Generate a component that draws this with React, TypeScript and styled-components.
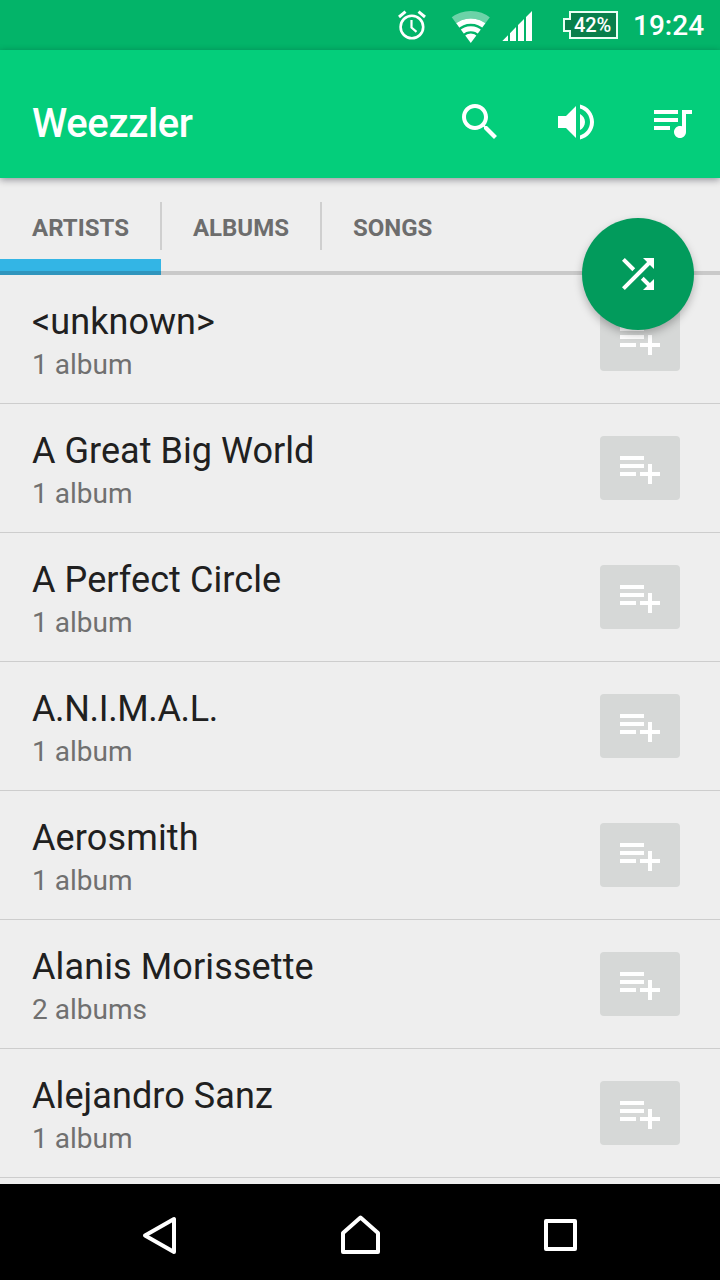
import React from 'react';
import styled, { createGlobalStyle } from 'styled-components';

const GlobalStyle = createGlobalStyle`
  * { box-sizing: border-box; }
  body { margin: 0; background: #eeeeee; font-family: Roboto, "Liberation Sans", sans-serif; }
`;

const Screen = styled.div`
  width: 720px;
  height: 1280px;
  display: flex;
  flex-direction: column;
  overflow: hidden;
  background: #eeeeee;
`;

const StatusBar = styled.header`
  height: 50px;
  flex: none;
  display: flex;
  align-items: center;
  justify-content: flex-end;
  padding-right: 16px;
  background: #03b469;
  color: #fff;
`;

const StatusIcons = styled.svg`
  display: block;
  width: 140px;
  height: 50px;
  margin-right: 26px;
`;

const Battery = styled.div`
  position: relative;
  width: 55px;
  height: 50px;
  display: flex;
  align-items: center;
  justify-content: center;
  padding-left: 4px;
  font-size: 20px;
  font-weight: 500;
  letter-spacing: -0.2px;
`;

const BatteryShape = styled.svg`
  position: absolute;
  inset: 0;
`;

const BatteryLabel = styled.span`
  position: relative;
`;

const Clock = styled.time`
  width: 71px;
  margin-left: 15px;
  font-size: 28px;
  font-weight: 500;
  line-height: 50px;
  padding-top: 2px;
  white-space: nowrap;
`;

const Toolbar = styled.div`
  position: relative;
  z-index: 1;
  height: 128px;
  flex: none;
  display: flex;
  align-items: flex-start;
  padding: 0 24px 0 32px;
  background: #04ce7b;
  color: #fff;
  box-shadow: 0 2px 7px rgba(0, 0, 20, 0.38);
`;

const AppTitle = styled.h1`
  margin: 0;
  flex: 1;
  padding-top: 50px;
  font-size: 40px;
  font-weight: 500;
  line-height: 48px;
  letter-spacing: -0.35px;
`;

const Actions = styled.div`
  display: flex;
  gap: 48px;
  padding-top: 48px;
`;

const Glyph = styled.svg`
  display: block;
  flex: none;
  width: 48px;
  height: 48px;
  fill: #fff;
`;

const Tabs = styled.nav`
  position: relative;
  height: 97px;
  flex: none;
  display: flex;
  border-bottom: 4px solid #c9c9c9;
`;

const Tab = styled.div<{ $active?: boolean }>`
  position: relative;
  height: 97px;
  padding: 34px 32px 0;
  font-size: 24px;
  font-weight: 700;
  line-height: 32px;
  color: #6d6d6d;
  ${({ $active }) =>
    $active &&
    `
    background: linear-gradient(#33b5e5 0 12px, #2f95bd 12px 16px) left bottom / 100% 16px no-repeat;
  `}
`;

const TabDivider = styled.i`
  width: 2px;
  height: 48px;
  margin: 24px -1px 0;
  background: #cfcfcf;
  position: relative;
`;

const ShuffleButton = styled.button`
  position: absolute;
  z-index: 2;
  top: 40px;
  right: 26px;
  width: 112px;
  height: 112px;
  padding: 0;
  border: 0;
  border-radius: 50%;
  display: grid;
  place-items: center;
  background: #029b5c;
  box-shadow: 0 4px 9px rgba(0, 0, 0, 0.26);
`;

const List = styled.ul`
  flex: 1;
  min-height: 0;
  margin: 0;
  padding: 0;
  overflow: hidden;
  list-style: none;
`;

const Row = styled.li`
  height: 129px;
  display: flex;
  align-items: center;
  padding: 0 40px 0 32px;
  border-bottom: 1px solid #cdcdcd;
`;

const RowText = styled.div`
  flex: 1;
  padding-top: 5px;
`;

const Name = styled.div<{ $tracking: number }>`
  font-size: 36px;
  line-height: 46px;
  letter-spacing: ${({ $tracking }) => $tracking}px;
  color: #202020;
`;

const Count = styled.div`
  font-size: 28px;
  line-height: 39px;
  color: #707070;
`;

const AddButton = styled.button`
  width: 80px;
  height: 64px;
  padding: 0;
  border: 0;
  border-radius: 4px;
  display: grid;
  place-items: center;
  background: #d6d8d7;
`;

const NavBar = styled.footer`
  height: 96px;
  flex: none;
  display: flex;
  justify-content: center;
  gap: 104px;
  background: #000;
`;

const NavIcon = styled.svg`
  width: 96px;
  height: 96px;
  fill: none;
  stroke: #fff;
  stroke-width: 4;
  stroke-linejoin: round;
`;

const SEARCH =
  'M15.5 14h-.79l-.28-.27C15.41 12.59 16 11.11 16 9.5 16 5.91 13.09 3 9.5 3S3 5.91 3 9.5 5.91 16 9.5 16c1.61 0 3.09-.59 4.23-1.57l.27.28v.79l5 4.99L20.49 19l-4.99-5zm-6 0C7.01 14 5 11.99 5 9.5S7.01 5 9.5 5 14 7.01 14 9.5 11.99 14 9.5 14z';
const VOLUME =
  'M3 9v6h4l5 5V4L7 9H3zm13.5 3c0-1.77-1.02-3.29-2.5-4.03v8.05c1.48-.73 2.5-2.25 2.5-4.02zM14 3.23v2.06c2.89.86 5 3.54 5 6.71s-2.11 5.85-5 6.71v2.06c4.01-.91 7-4.49 7-8.77s-2.99-7.86-7-8.77z';
const QUEUE =
  'M15 6H3v2h12V6zm0 4H3v2h12v-2zM3 16h8v-2H3v2zM17 6v8.18c-.31-.11-.65-.18-1-.18-1.66 0-3 1.34-3 3s1.34 3 3 3 3-1.34 3-3V8h3V6h-5z';
const SHUFFLE =
  'M10.59 9.17L5.41 4 4 5.41l5.17 5.17 1.42-1.41zM14.5 4l2.04 2.04L4 18.59 5.41 20 17.96 7.46 20 9.5V4h-5.5zm.33 9.41l-1.41 1.41 3.13 3.13L14.5 20H20v-5.5l-2.04 2.04-3.13-3.13z';
const PLAYLIST_ADD =
  'M14 10H2v2h12v-2zm0-4H2v2h12V6zm4 8v-4h-2v4h-4v2h4v4h2v-4h4v-2h-4zM2 16h8v-2H2v2z';

const artists = [
  { name: '<unknown>', count: '1 album', tracking: 0.05 },
  { name: 'A Great Big World', count: '1 album', tracking: 0.04 },
  { name: 'A Perfect Circle', count: '1 album', tracking: 0.08 },
  { name: 'A.N.I.M.A.L.', count: '1 album', tracking: -0.36 },
  { name: 'Aerosmith', count: '1 album', tracking: 0.13 },
  { name: 'Alanis Morissette', count: '2 albums', tracking: 0.12 },
  { name: 'Alejandro Sanz', count: '1 album', tracking: 0.08 },
];

export default function App() {
  return (
    <Screen>
      <GlobalStyle />
      <StatusBar>
        <StatusIcons viewBox="397 0 140 50">
          <g fill="none" stroke="#fff" strokeWidth="2.6">
            <circle cx="411.9" cy="27" r="11.3" />
            <path d="M411.5 20v7.6l5 4.2" strokeWidth="2.2" />
            <path d="M399 17l6.5-5.3M425 17l-6.5-5.3" strokeWidth="3" />
          </g>
          <clipPath id="fan">
            <path d="M470.8 43L451 16.2V5h39.6v11.2z" />
          </clipPath>
          <g clipPath="url(#fan)" fill="none" stroke="#fff">
            <circle cx="470.8" cy="43" r="28.2" strokeWidth="7.6" opacity="0.42" />
            <circle cx="470.8" cy="43" r="21.8" strokeWidth="5.2" />
            <circle cx="470.8" cy="43" r="14.2" strokeWidth="5" />
            <circle cx="470.8" cy="43" r="4.7" strokeWidth="9.4" />
          </g>
          <path
            fill="#fff"
            d="M502.3 41l5.7-5.8V41zM510 41v-7.8l6-6.1V41zM518 41V25l6-6.1V41zM526 41V17l6-6V41z"
          />
        </StatusIcons>
        <Battery>
          <BatteryShape width="55" height="50" viewBox="0 0 55 50">
            <path d="M7 12h47v26H7v-7H1V19h6z" fill="#087f4b" stroke="#e9fff4" strokeWidth="2" />
          </BatteryShape>
          <BatteryLabel>42%</BatteryLabel>
        </Battery>
        <Clock>19:24</Clock>
      </StatusBar>
      <Toolbar>
        <AppTitle>Weezzler</AppTitle>
        <Actions>
          {[SEARCH, VOLUME, QUEUE].map((d) => (
            <Glyph key={d} viewBox="0 0 24 24">
              <path d={d} />
            </Glyph>
          ))}
        </Actions>
      </Toolbar>
      <Tabs>
        <Tab $active>ARTISTS</Tab>
        <TabDivider />
        <Tab>ALBUMS</Tab>
        <TabDivider />
        <Tab>SONGS</Tab>
        <ShuffleButton aria-label="Shuffle">
          <Glyph viewBox="0 0 24 24">
            <path d={SHUFFLE} />
          </Glyph>
        </ShuffleButton>
      </Tabs>
      <List>
        {artists.map((a) => (
          <Row key={a.name}>
            <RowText>
              <Name $tracking={a.tracking}>{a.name}</Name>
              <Count>{a.count}</Count>
            </RowText>
            <AddButton aria-label="Add to playlist">
              <Glyph viewBox="0 0 24 24">
                <path d={PLAYLIST_ADD} />
              </Glyph>
            </AddButton>
          </Row>
        ))}
      </List>
      <NavBar>
        <NavIcon viewBox="0 0 96 96">
          <path d="M33 51.5L62 35v33z" />
        </NavIcon>
        <NavIcon viewBox="0 0 96 96">
          <path d="M48.5 33.5L31 49v19h35V49z" />
        </NavIcon>
        <NavIcon viewBox="0 0 96 96">
          <path d="M34 37h29v28H34z" />
        </NavIcon>
      </NavBar>
    </Screen>
  );
}
